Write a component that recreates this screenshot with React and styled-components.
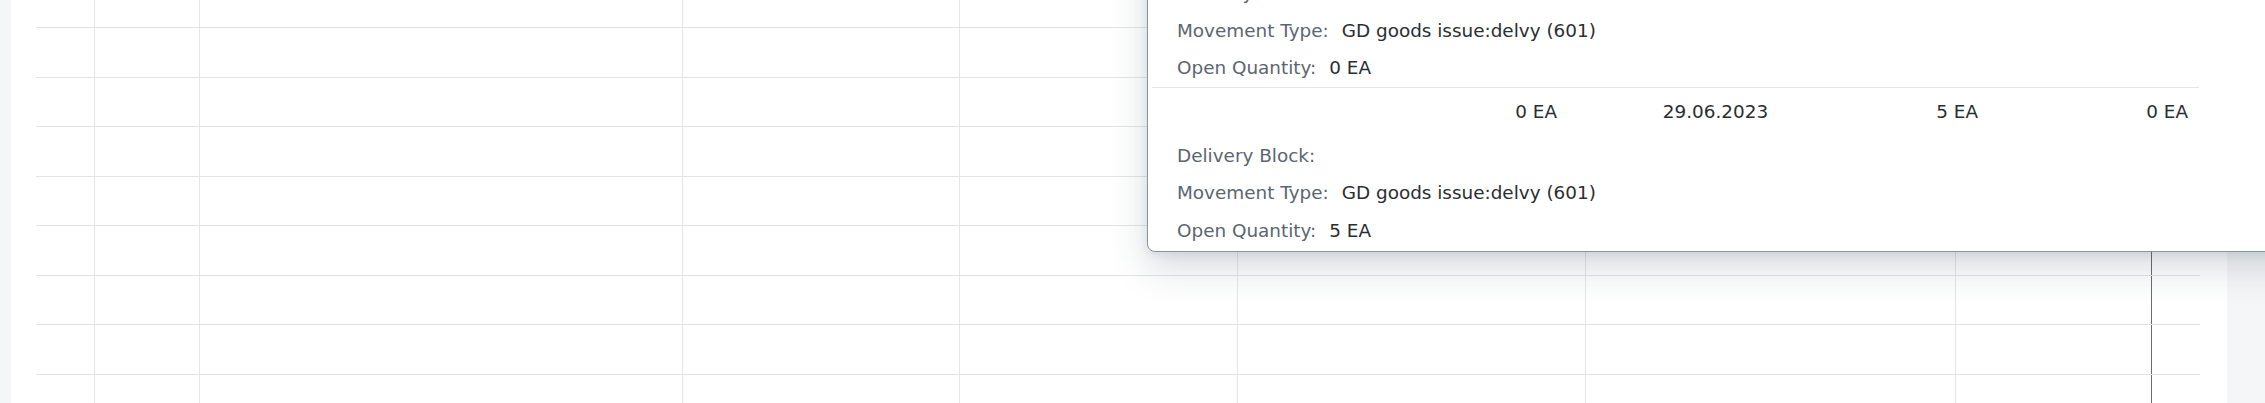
import React from 'react';
import styled, { createGlobalStyle } from 'styled-components';

const GlobalStyle = createGlobalStyle`
  html, body {
    margin: 0;
    padding: 0;
    overflow: hidden;
    background: #f5f6f7;
  }
  body {
    font-family: "DejaVu Sans", "Liberation Sans", sans-serif;
  }
`;

const COLS = '59px 105px 483px 277px 278px 348px 370px 196px 48px';

const Page = styled.div`
  position: relative;
  display: flex;
  height: 403px;
  box-sizing: border-box;
  padding: 0 38px 0 11px;
  background: #f5f6f7;
  overflow: hidden;
`;

const Panel = styled.main`
  flex: 1;
  background: #ffffff;
  padding: 0 27px 0 25px;
  overflow: hidden;
`;

const Table = styled.div`
  display: flex;
  flex-direction: column;
  margin-top: -21.5px;
`;

const Row = styled.div`
  display: grid;
  grid-template-columns: ${COLS};
  height: 49.5px;
  flex: none;
  box-sizing: border-box;
  border-bottom: 1px solid #e4e4e4;
`;

const Cell = styled.div`
  border-right: 1px solid ${(p) => (p.$dark ? '#6a6d70' : '#e6e6e6')};
  &:last-child {
    border-right: none;
  }
`;

const Popover = styled.div`
  position: absolute;
  left: 1147px;
  right: -40px;
  bottom: 151px;
  background: #ffffff;
  border: 1px solid #8a949e;
  border-radius: 8px;
  box-shadow: 0 16px 36px rgba(34, 53, 72, 0.18), 0 3px 8px rgba(34, 53, 72, 0.08);
  padding: 0 0 2px 4px;
  font-size: 18.4px;
`;

const List = styled.div`
  width: 1047px;
  display: flex;
  flex-direction: column;
`;

const Item = styled.div`
  border-top: 1px solid #e5e5e5;
`;

const CellsRow = styled.div`
  display: grid;
  grid-template-columns: 415px 297px 124px 211px;
  height: 48px;
  align-items: center;
  color: #2a2e32;
`;

const CellText = styled.span`
  text-align: ${(p) => p.$align || 'right'};
  padding-right: ${(p) => p.$pad || 0}px;
  white-space: nowrap;
`;

const Popin = styled.div`
  padding-top: 1px;
`;

const PopinRow = styled.div`
  display: flex;
  align-items: center;
  height: 37.5px;
  padding-left: 25px;
  white-space: nowrap;
`;

const Label = styled.span`
  color: #5b6670;
`;

const Value = styled.span`
  color: #2a2e32;
  margin-left: 13px;
`;

const items = [
  { ordered: '', date: '', confirmed: '', open: '', openQty: '0 EA' },
  { ordered: '0 EA', date: '29.06.2023', confirmed: '5 EA', open: '0 EA', openQty: '5 EA' },
];

export default function App() {
  const rows = Array.from({ length: 9 });
  const cells = Array.from({ length: 9 });
  return (
    <>
      <GlobalStyle />
      <Page>
        <Panel>
          <Table>
            {rows.map((_, r) => (
              <Row key={r}>
                {cells.map((__, c) => (
                  <Cell key={c} $dark={c === 7} />
                ))}
              </Row>
            ))}
          </Table>
        </Panel>
        <Popover>
          <List>
            {items.map((it, i) => (
              <Item key={i}>
                <CellsRow>
                  <CellText $pad={10}>{it.ordered}</CellText>
                  <CellText $align="center">{it.date}</CellText>
                  <CellText $pad={10}>{it.confirmed}</CellText>
                  <CellText $pad={11}>{it.open}</CellText>
                </CellsRow>
                <Popin>
                  <PopinRow>
                    <Label>Delivery Block:</Label>
                  </PopinRow>
                  <PopinRow>
                    <Label>Movement Type:</Label>
                    <Value>GD goods issue:delvy (601)</Value>
                  </PopinRow>
                  <PopinRow>
                    <Label>Open Quantity:</Label>
                    <Value>{it.openQty}</Value>
                  </PopinRow>
                </Popin>
              </Item>
            ))}
          </List>
        </Popover>
      </Page>
    </>
  );
}
